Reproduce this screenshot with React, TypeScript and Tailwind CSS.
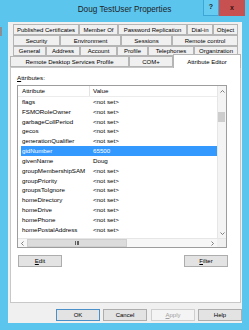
import React from "react";

const tabRows: { label: string; w: number }[][] = [
  [
    { label: "Published Certificates", w: 66 },
    { label: "Member Of", w: 39 },
    { label: "Password Replication", w: 69 },
    { label: "Dial-in", w: 26 },
    { label: "Object", w: 25 },
  ],
  [
    { label: "Security", w: 47 },
    { label: "Environment", w: 61 },
    { label: "Sessions", w: 51 },
    { label: "Remote control", w: 66 },
  ],
  [
    { label: "General", w: 33 },
    { label: "Address", w: 34 },
    { label: "Account", w: 37 },
    { label: "Profile", w: 31 },
    { label: "Telephones", w: 46 },
    { label: "Organization", w: 44 },
  ],
];

const attributes: [string, string][] = [
  ["flags", "<not set>"],
  ["FSMORoleOwner", "<not set>"],
  ["garbageCollPeriod", "<not set>"],
  ["gecos", "<not set>"],
  ["generationQualifier", "<not set>"],
  ["gidNumber", "65500"],
  ["givenName", "Doug"],
  ["groupMembershipSAM", "<not set>"],
  ["groupPriority", "<not set>"],
  ["groupsToIgnore", "<not set>"],
  ["homeDirectory", "<not set>"],
  ["homeDrive", "<not set>"],
  ["homePhone", "<not set>"],
  ["homePostalAddress", "<not set>"],
];

const Tab = ({ label, w, h }: { label: string; w: number; h: string }) => (
  <div
    className={`${h} flex items-center justify-center border border-[#b5b5b5] bg-[#f0f0f0] text-[6px] leading-none text-black whitespace-nowrap overflow-hidden`}
    style={{ width: w }}
  >
    {label}
  </div>
);

const Btn = ({
  children,
  def,
  disabled,
}: {
  children: React.ReactNode;
  def?: boolean;
  disabled?: boolean;
}) => (
  <div
    className={`w-[44px] h-[12px] flex items-center justify-center text-[6px] leading-none border ${
      def
        ? "border-[#4a8fc8] bg-[#e3e3e3] text-black"
        : disabled
        ? "border-[#cfcfcf] bg-[#f4f4f4] text-[#a0a0a0]"
        : "border-[#adadad] bg-[#e3e3e3] text-black"
    }`}
  >
    {children}
  </div>
);

export default function App() {
  return (
    <div className="w-[249px] h-[330px] bg-[#5cc5ee] flex flex-col relative overflow-hidden font-['Liberation_Sans',Arial,sans-serif]">
      {/* window behind */}
      <div className="absolute left-0 top-[27px] w-[2px] h-[9px] bg-[#8a8f95]" />

      {/* title bar */}
      <div className="h-[22px] relative flex items-center justify-center">
        <span className="text-[8.2px] text-[#1e1e1e] leading-none -mt-[1px]">Doug TestUser Properties</span>
        <div className="absolute top-0 right-[4px] flex">
          <div className="w-[16px] h-[16px] border border-[#3da6d6] border-t-0 bg-[#66cbf1] flex items-center justify-center text-[7px] font-bold text-[#1e1e1e]">
            ?
          </div>
          <div className="w-[26px] h-[16px] bg-[#c75050] flex items-center justify-center text-[7px] font-bold text-[#3b1414]">
            x
          </div>
        </div>
      </div>

      {/* client area */}
      <div className="ml-[8px] w-[234px] h-[301px] bg-[#f0f0f0] flex flex-col">
        {/* tabs */}
        <div className="pt-[2px] flex flex-col">
          {tabRows.map((row, i) => (
            <div key={i} className="flex pl-[5px]">
              {row.map((t) => (
                <Tab key={t.label} label={t.label} w={t.w} h={i === 2 ? "h-[10px]" : "h-[11px]"} />
              ))}
            </div>
          ))}
          <div className="flex pl-[2px] items-end h-[11px]">
            <Tab label="Remote Desktop Services Profile" w={119} h="h-[11px]" />
            <Tab label="COM+" w={44} h="h-[11px]" />
            <div className="relative z-10 w-[68px] h-[14px] -mt-[3px] mb-[-1px] bg-white border border-[#b5b5b5] border-b-0 flex items-center justify-center text-[6px] leading-none text-black">
              Attribute Editor
            </div>
          </div>
        </div>

        {/* panel */}
        <div className="ml-[2px] w-[231px] h-[236px] bg-white border border-[#c8c8c8] flex flex-col">
          <div className="pl-[6px] pt-[7px] h-[17px] text-[6.2px] leading-none text-black">
            <span className="underline decoration-[0.5px] underline-offset-[1px]">A</span>ttributes:
          </div>

          {/* listbox */}
          <div className="ml-[6px] w-[210px] h-[163px] border border-[#9d9d9d] flex flex-col">
            <div className="flex flex-1 min-h-0">
              <div className="flex-1 flex flex-col overflow-hidden">
                <div className="h-[11px] flex border-b border-[#ececec] text-[6.2px] leading-none text-black shrink-0">
                  <div className="w-[72px] pl-[4px] flex items-center border-r border-[#e3e3e3]">Attribute</div>
                  <div className="pl-[3px] flex items-center">Value</div>
                </div>
                {attributes.map(([a, v]) => {
                  const sel = a === "gidNumber";
                  return (
                    <div
                      key={a}
                      className={`h-[9.85px] shrink-0 ml-[3px] flex items-center text-[6.2px] leading-none ${
                        sel ? "bg-[#3399ff] text-white" : "text-black"
                      }`}
                    >
                      <div className="w-[72px] pl-[1px] whitespace-nowrap">{a}</div>
                      <div className="whitespace-nowrap">{v}</div>
                    </div>
                  );
                })}
              </div>
              {/* vertical scrollbar */}
              <div className="w-[9px] bg-[#f4f4f4] border-l border-[#e6e6e6] flex flex-col">
                <div className="h-[11px] flex items-center justify-center">
                  <svg width="5" height="3" viewBox="0 0 5 3">
                    <path d="M0.5 2.5 L2.5 0.5 L4.5 2.5" fill="none" stroke="#606060" strokeWidth="0.8" />
                  </svg>
                </div>
                <div className="mt-[15px] h-[10px] w-[7px] bg-[#cdcdcd]" />
                <div className="flex-1" />
                <div className="h-[10px] flex items-center justify-center">
                  <svg width="5" height="3" viewBox="0 0 5 3">
                    <path d="M0.5 0.5 L2.5 2.5 L4.5 0.5" fill="none" stroke="#606060" strokeWidth="0.8" />
                  </svg>
                </div>
              </div>
            </div>
            {/* horizontal scrollbar */}
            <div className="h-[9px] flex shrink-0 border-t border-[#e6e6e6]">
              <div className="flex-1 bg-[#f7f7f7] flex items-center">
                <div className="w-[9px] flex items-center justify-center">
                  <svg width="3" height="5" viewBox="0 0 3 5">
                    <path d="M2.5 0.5 L0.5 2.5 L2.5 4.5" fill="none" stroke="#606060" strokeWidth="0.8" />
                  </svg>
                </div>
                <div className="w-[100px] h-[8px] bg-[#dcdcdc] border border-[#cfcfcf] flex items-center justify-center">
                  <div className="flex gap-[1px]">
                    <div className="w-[0.8px] h-[4px] bg-[#606060]" />
                    <div className="w-[0.8px] h-[4px] bg-[#606060]" />
                    <div className="w-[0.8px] h-[4px] bg-[#606060]" />
                  </div>
                </div>
                <div className="flex-1" />
                <div className="w-[9px] flex items-center justify-center">
                  <svg width="3" height="5" viewBox="0 0 3 5">
                    <path d="M0.5 0.5 L2.5 2.5 L0.5 4.5" fill="none" stroke="#606060" strokeWidth="0.8" />
                  </svg>
                </div>
              </div>
              <div className="w-[9px] bg-[#f0f0f0]" />
            </div>
          </div>

          {/* edit / filter */}
          <div className="mt-[7px] flex pl-[7px] pr-[12px] justify-between">
            <Btn>
              <span className="underline decoration-[0.5px] underline-offset-[1px]">E</span>dit
            </Btn>
            <Btn>
              <span className="underline decoration-[0.5px] underline-offset-[1px]">F</span>ilter
            </Btn>
          </div>
        </div>

        {/* dialog buttons */}
        <div className="mt-[6px] flex pl-[48px]">
          <Btn def>OK</Btn>
          <div className="ml-[3px]">
            <Btn>Cancel</Btn>
          </div>
          <div className="ml-[4px]">
            <Btn disabled>
              <span className="underline decoration-[0.5px] underline-offset-[1px]">A</span>pply
            </Btn>
          </div>
          <div className="ml-[3px]">
            <Btn>Help</Btn>
          </div>
        </div>
      </div>
    </div>
  );
}
